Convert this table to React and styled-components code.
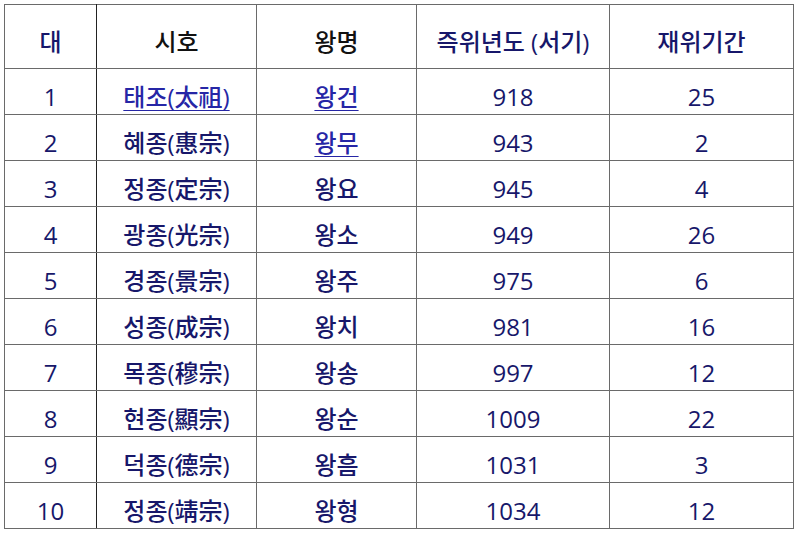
import styled, { createGlobalStyle } from "styled-components";

const GlobalStyle = createGlobalStyle`
  html, body {
    margin: 0;
    padding: 0;
    background: #fff;
  }
  body {
    padding: 4px 0 0 4px;
    font-family: "Open Sans", "Noto Sans CJK KR", sans-serif;
  }
`;

const Table = styled.table`
  border-collapse: collapse;
  width: 789px;
  table-layout: fixed;
  border: 1px solid #6a6a6a;
`;

const HeadCell = styled.th`
  height: 53px;
  padding: 10px 0 0;
  font-weight: 500;
  font-size: 24px;
  line-height: 1;
  text-align: center;
  vertical-align: middle;
  color: ${p => (p.$dark ? "#111" : "#17176a")};
  border: 1px solid #6a6a6a;
  border-right-color: ${p => (p.$first ? "#222" : "#6a6a6a")};
`;

const Cell = styled.td`
  height: 35px;
  padding: 10px 0 0;
  font-size: 24px;
  font-weight: 500;
  line-height: 1;
  text-align: center;
  vertical-align: middle;
  color: #17176a;
  border: 1px solid #6a6a6a;
  border-right-color: ${p => (p.$first ? "#222" : "#6a6a6a")};
`;

const Link = styled.a`
  color: #2626a6;
  text-decoration: underline;
  text-underline-offset: 4px;
  text-decoration-thickness: 1px;
`;

const rows = [
  [1, "태조(太祖)", "왕건", 918, 25, true, true],
  [2, "혜종(惠宗)", "왕무", 943, 2, false, true],
  [3, "정종(定宗)", "왕요", 945, 4],
  [4, "광종(光宗)", "왕소", 949, 26],
  [5, "경종(景宗)", "왕주", 975, 6],
  [6, "성종(成宗)", "왕치", 981, 16],
  [7, "목종(穆宗)", "왕송", 997, 12],
  [8, "현종(顯宗)", "왕순", 1009, 22],
  [9, "덕종(德宗)", "왕흠", 1031, 3],
  [10, "정종(靖宗)", "왕형", 1034, 12],
];

export default function App() {
  return (
    <>
      <GlobalStyle />
      <Table>
        <colgroup>
          <col style={{ width: 92 }} />
          <col style={{ width: 160 }} />
          <col style={{ width: 160 }} />
          <col style={{ width: 193 }} />
          <col style={{ width: 184 }} />
        </colgroup>
        <thead>
          <tr>
            <HeadCell $first>대</HeadCell>
            <HeadCell $dark>시호</HeadCell>
            <HeadCell $dark>왕명</HeadCell>
            <HeadCell>즉위년도 (서기)</HeadCell>
            <HeadCell>재위기간</HeadCell>
          </tr>
        </thead>
        <tbody>
          {rows.map(([n, title, name, year, span, titleLink, nameLink]) => (
            <tr key={n}>
              <Cell $first>{n}</Cell>
              <Cell>{titleLink ? <Link href="#">{title}</Link> : title}</Cell>
              <Cell>{nameLink ? <Link href="#">{name}</Link> : name}</Cell>
              <Cell>{year}</Cell>
              <Cell>{span}</Cell>
            </tr>
          ))}
        </tbody>
      </Table>
    </>
  );
}
